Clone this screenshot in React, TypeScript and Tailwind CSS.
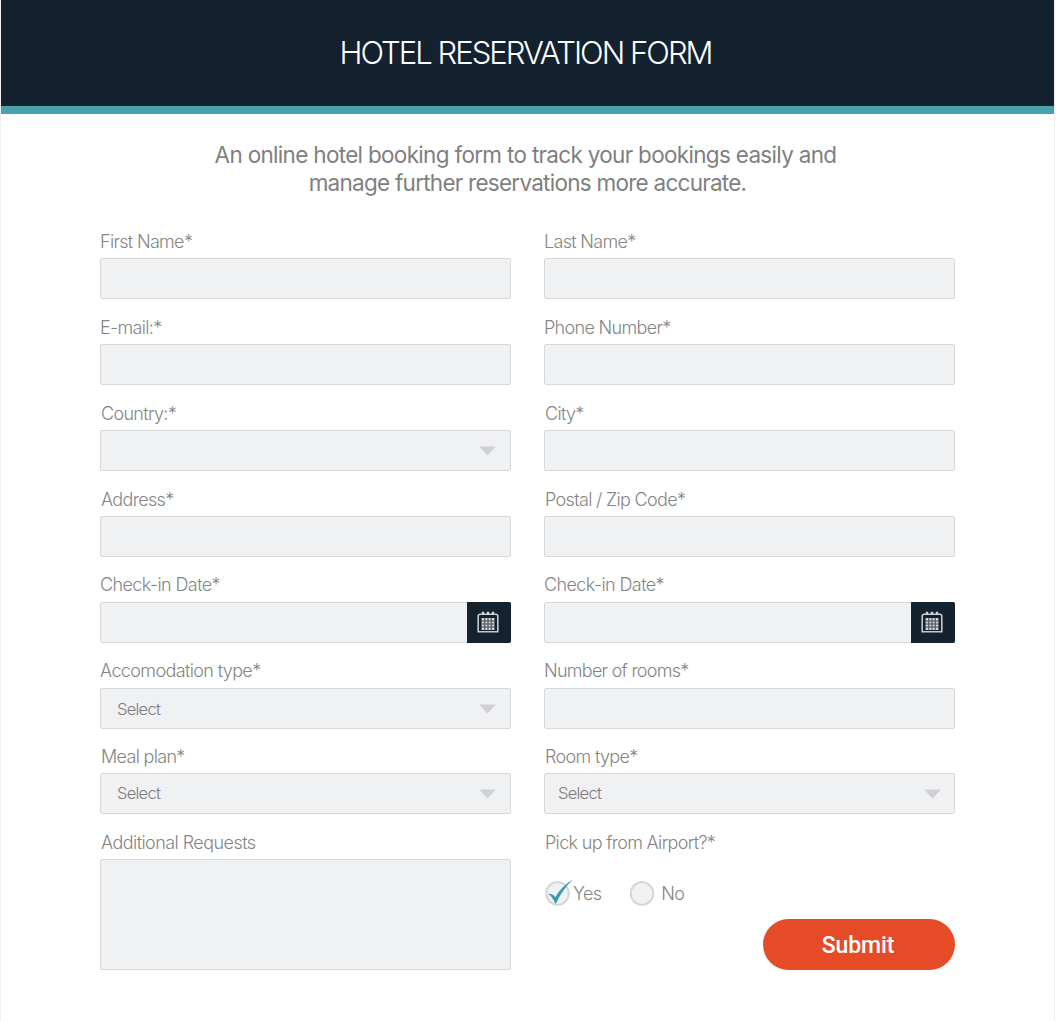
import React from "react";

const sans = "font-['Inter','Liberation_Sans',sans-serif]";

function Caret({ className = "mr-[14px]" }: { className?: string }) {
  return (
    <svg className={`ml-auto shrink-0 ${className}`} width="17" height="10" viewBox="0 0 17 10">
      <path d="M0 0.5H17L8.5 9.5Z" fill="#cfd0d1" />
    </svg>
  );
}

function CalendarButton() {
  return (
    <button type="button" className="-my-px -mr-px ml-auto flex h-[41px] w-11 shrink-0 items-center justify-center rounded-r-[2px] bg-[#14212f] pr-0.5 pb-px">
      <svg width="22" height="22" viewBox="0 0 22 22" fill="none">
        <path d="M1.2 20.8V5.2Q1.2 3.2 3.2 3.2H18.8Q20.8 3.2 20.8 5.2V20.8Z" stroke="#c6cace" strokeWidth="1.6" />
        <path d="M6 0.8V4M11 0.8V4M16 0.8V4" stroke="#d3d6d9" strokeWidth="2.4" />
        <rect x="4.6" y="7" width="12.8" height="12" fill="#d3d6d9" />
        <path d="M7.8 7V19M11 7V19M14.2 7V19M4.6 10H17.4M4.6 13H17.4M4.6 16H17.4" stroke="#3b4652" strokeWidth="1" />
      </svg>
    </button>
  );
}

type FieldProps = {
  label: string;
  tracking?: string;
  indent?: string;
  row?: string;
  box?: string;
  children?: React.ReactNode;
};

function Field({
  label,
  tracking = "tracking-[-0.68px]",
  indent = "pt-px",
  row = "h-[86px]",
  box = "h-[41px]",
  children,
}: FieldProps) {
  return (
    <div className={`flex flex-col ${row}`}>
      <label className={`mb-[5px] h-6 whitespace-nowrap text-[18px] leading-6 font-light text-[#858585] ${tracking} ${indent}`}>
        {label}
      </label>
      <div className={`flex shrink-0 items-center rounded-[2px] border border-[#d6d8da] bg-[#f0f1f3] ${box}`}>{children}</div>
    </div>
  );
}

function Placeholder({ className = "pl-4" }: { className?: string }) {
  return <span className={`text-[16.5px] leading-6 font-light tracking-[-0.75px] text-[#7c7c7c] ${className}`}>Select</span>;
}

export default function App() {
  return (
    <div className={`flex h-[1021px] w-[1055px] flex-col border-x border-[#f0f0f0] bg-white ${sans}`}>
      <header className="flex h-[114px] shrink-0 items-center justify-center border-b-8 border-[#48a2ab] bg-[#14212f]">
        <h1 className="pr-1 whitespace-nowrap text-[31px] leading-10 font-light tracking-[-1.95px] text-white">HOTEL RESERVATION FORM</h1>
      </header>

      <p className="mt-[27px] text-center text-[22.5px] leading-7 text-[#7f7f7f]">
        <span className="block pr-1 tracking-[-0.69px]">An online hotel booking form to track your bookings easily and</span>
        <span className="block tracking-[-0.74px]">manage further reservations more accurate.</span>
      </p>

      <form className="mt-8 ml-[99px] grid w-[855px] grid-cols-[411px_411px] gap-x-[33px]">
        <Field label="First Name*" />
        <Field label="Last Name*" />
        <Field label="E-mail:*" />
        <Field label="Phone Number*" />
        <Field label="Country:*" indent="pt-px pl-px">
          <Caret />
        </Field>
        <Field label="City*" indent="pt-px pl-px" />
        <Field label="Address*" indent="pt-px pl-px" />
        <Field label="Postal / Zip Code*" indent="pt-px pl-px" />
        <Field label="Check-in Date*" indent="" tracking="tracking-[-0.6px]">
          <CalendarButton />
        </Field>
        <Field label="Check-in Date*" indent="" tracking="tracking-[-0.6px]">
          <CalendarButton />
        </Field>
        <Field label="Accomodation type*" indent="" tracking="tracking-[-0.63px]" row="h-[85px]">
          <Placeholder />
          <Caret />
        </Field>
        <Field label="Number of rooms*" indent="" tracking="tracking-[-0.73px]" row="h-[85px]" />
        <Field label="Meal plan*" indent="pt-px pl-px">
          <Placeholder className="-mt-0.5 pl-4" />
          <Caret />
        </Field>
        <Field label="Room type*" indent="pt-px pl-px">
          <Placeholder className="-mt-0.5 pl-[13px]" />
          <Caret className="mr-[13px]" />
        </Field>
        <Field label="Additional Requests" tracking="tracking-[-0.56px]" indent="pt-px pl-px" row="h-[140px]" box="h-[111px]" />
        <div className="flex h-[140px] flex-col">
          <span className="h-6 pt-px pl-px text-[18px] leading-6 font-light tracking-[-0.68px] text-[#858585]">Pick up from Airport?*</span>
          <div className="mt-[22px] flex h-[34px] items-center text-[18px] leading-6 font-light tracking-[-0.7px] text-[#858585]">
            <label className="flex items-center">
              <svg width="29" height="30" viewBox="0 0 29 30">
                <circle cx="13.5" cy="15.5" r="11.3" fill="#f0f1f3" stroke="#d3d4d5" strokeWidth="1.8" />
                <path d="M3.8 15.8Q9 15.5 11.3 19.2Q17 8.5 29 1.5Q18 12 12.2 25.2H11Q8.5 18.5 3.8 15.8Z" fill="#3a9daa" />
              </svg>
              <span className="pt-0.5">Yes</span>
            </label>
            <label className="ml-[28px] flex items-center">
              <svg className="mr-[6px]" width="26" height="30" viewBox="0 0 26 30">
                <circle cx="13" cy="15.5" r="11.3" fill="#f0f1f3" stroke="#d3d4d5" strokeWidth="1.8" />
              </svg>
              <span className="pt-0.5">No</span>
            </label>
          </div>
          <button
            type="button"
            className="mt-[9px] h-[51px] w-48 shrink-0 self-end rounded-full bg-[#e54b26] pt-[3px] pr-0.5 font-['Roboto','Liberation_Sans',sans-serif] text-[23px] leading-8 font-medium tracking-[-0.1px] text-white"
          >
            Submit
          </button>
        </div>
      </form>
    </div>
  );
}
